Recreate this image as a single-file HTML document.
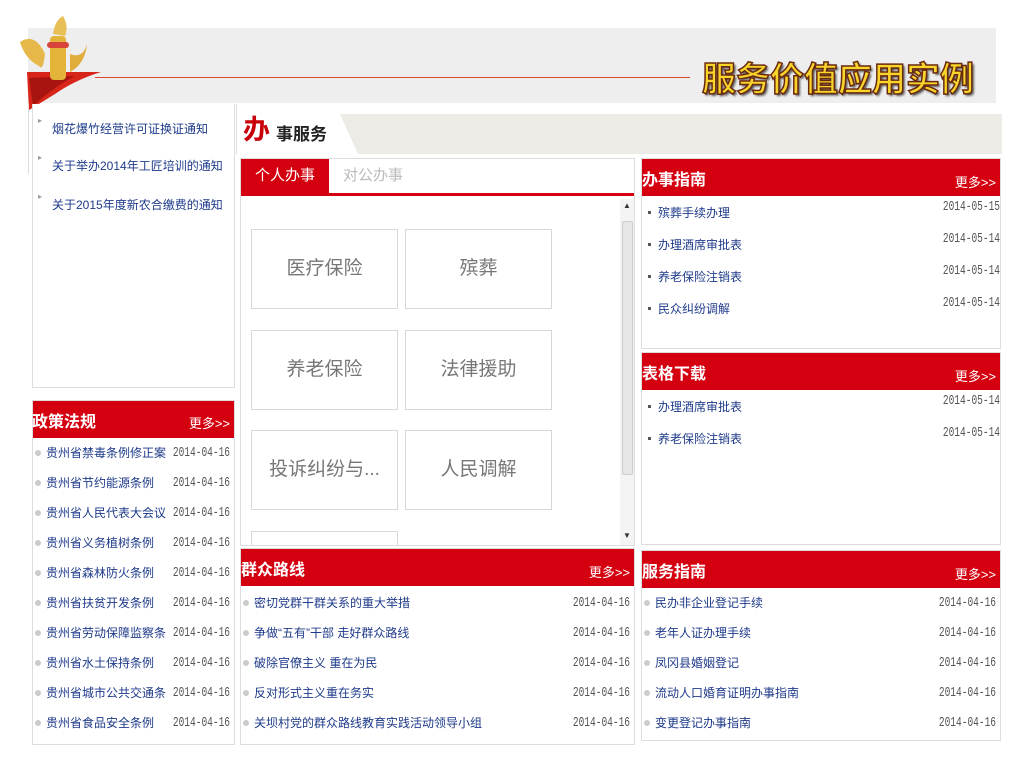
<!DOCTYPE html>
<html><head><meta charset="utf-8">
<style>
*{margin:0;padding:0;box-sizing:border-box}
body{width:1024px;height:768px;background:#fff;position:relative;overflow:hidden;font-family:"Liberation Sans","Noto Sans CJK SC","WenQuanYi Zen Hei",sans-serif;font-size:12px;color:#1e3a8a}
.a{position:absolute}
.hdr{background:#d4000f;color:#fff;height:37px}
.hdr b{position:absolute;left:0;top:7px;font-size:16px;font-weight:bold}
.hdr i{position:absolute;right:4px;top:13px;font-style:normal;font-size:13px;color:#fff}
.row{position:absolute;left:0;right:0;height:30px;line-height:30px;white-space:nowrap;font-size:12px}
.dot{display:inline-block;width:6px;height:6px;border-radius:3px;background:#ccc;margin:0 5px 1px 2px;vertical-align:middle}
.sq{display:inline-block;width:3px;height:3px;background:#555;margin:0 7px 2px 6px;vertical-align:middle}
.dt{position:absolute;right:4px;top:0;color:#555;font-family:"Liberation Mono",monospace;font-size:14px;transform:scaleX(0.68);transform-origin:right center}
.btn{position:absolute;width:147px;height:80px;border:1px solid #d8d8d8;text-align:center;line-height:78px;font-size:19px;color:#777}
.box{position:absolute;border:1px solid #ddd;background:#fff}
.nt{position:absolute;left:38px;white-space:nowrap;font-size:12px}
.nt s{text-decoration:none;color:#999;font-size:8px;position:absolute;left:0;top:-4px}
.nt span{margin-left:14px}
</style></head><body>
<div class="a" style="left:28px;top:28px;width:968px;height:75px;background:#eeeeee"></div>
<div class="a" style="left:95px;top:77px;width:595px;height:1px;background:#d8482a"></div>
<svg class="a" style="left:15px;top:14px" width="90" height="96">
<path d="M12 58 L86 58 Q60 66 40 80 L14 96 Z" fill="#d8251a"/>
<path d="M14 64 L60 62 Q40 72 18 92 Z" fill="#a81510"/>
<rect x="35" y="22" width="16" height="44" rx="4" fill="#e3b33a"/>
<path d="M5 28 Q20 18 30 40 Q28 58 24 52 Q10 45 5 28Z" fill="#e6b84a"/>
<path d="M55 40 Q68 45 72 30 Q70 50 55 58Z" fill="#e0ac3c"/>
<path d="M38 20 Q40 6 48 2 Q54 12 50 22Z" fill="#e8c058"/>
<rect x="32" y="28" width="22" height="6" rx="3" fill="#d8453a"/>
</svg>
<div class="a" style="left:702px;top:52px;font-size:34px;font-weight:bold;color:#f8d52a;-webkit-text-stroke:1.5px #6a2a10;text-shadow:2px 2px 2px #555;white-space:nowrap">服务价值应用实例</div>

<div class="box" style="left:32px;top:104px;width:203px;height:284px;border-top:none"></div>
<div class="a" style="left:28px;top:104px;width:1px;height:70px;background:#ddd"></div>
<div class="nt" style="top:120px"><s>▸</s><span>烟花爆竹经营许可证换证通知</span></div>
<div class="nt" style="top:157px"><s>▸</s><span>关于举办2014年工匠培训的通知</span></div>
<div class="nt" style="top:196px"><s>▸</s><span>关于2015年度新农合缴费的通知</span></div>

<div class="box" style="left:32px;top:400px;width:203px;height:345px">
<div class="hdr a" style="left:0;top:0;width:201px"><b style="left:-1px">政策法规</b><i style="top:12px">更多&gt;&gt;</i></div>
<div class="a" style="left:0;top:37px;width:201px">
<div class="row" style="top:0"><span class="dot"></span>贵州省禁毒条例修正案<span class="dt">2014-04-16</span></div>
<div class="row" style="top:30px"><span class="dot"></span>贵州省节约能源条例<span class="dt">2014-04-16</span></div>
<div class="row" style="top:60px"><span class="dot"></span>贵州省人民代表大会议<span class="dt">2014-04-16</span></div>
<div class="row" style="top:90px"><span class="dot"></span>贵州省义务植树条例<span class="dt">2014-04-16</span></div>
<div class="row" style="top:120px"><span class="dot"></span>贵州省森林防火条例<span class="dt">2014-04-16</span></div>
<div class="row" style="top:150px"><span class="dot"></span>贵州省扶贫开发条例<span class="dt">2014-04-16</span></div>
<div class="row" style="top:180px"><span class="dot"></span>贵州省劳动保障监察条<span class="dt">2014-04-16</span></div>
<div class="row" style="top:210px"><span class="dot"></span>贵州省水土保持条例<span class="dt">2014-04-16</span></div>
<div class="row" style="top:240px"><span class="dot"></span>贵州省城市公共交通条<span class="dt">2014-04-16</span></div>
<div class="row" style="top:270px"><span class="dot"></span>贵州省食品安全条例<span class="dt">2014-04-16</span></div>
</div></div>

<div class="a" style="left:236px;top:104px;width:1px;height:50px;background:#ddd"></div>
<svg class="a" style="left:340px;top:114px" width="662" height="40"><path d="M0 0 L662 0 L662 40 L18 40 Z" fill="#ecebe6"/></svg>
<div class="a" style="left:243px;top:108px;font-size:27px;font-weight:bold;color:#c8000a">办</div>
<div class="a" style="left:276px;top:120px;font-size:17px;font-weight:bold;color:#222">事服务</div>

<div class="box" style="left:240px;top:158px;width:395px;height:388px">
<div class="a" style="left:0;top:0;width:88px;height:34px;background:#d4000f;color:#fff;font-size:15px;line-height:34px;text-align:center">个人办事</div>
<div class="a" style="left:102px;top:0;font-size:15px;line-height:34px;color:#bbb">对公办事</div>
<div class="a" style="left:0;top:34px;width:393px;height:3px;background:#d4000f"></div>
<div class="a" style="left:379px;top:40px;width:14px;height:346px;background:#f4f4f4"></div>
<div class="a" style="left:381px;top:62px;width:11px;height:254px;background:#e6e6e6;border:1px solid #ccc;border-radius:2px"></div>
<div class="a" style="left:382px;top:42px;font-size:8px;color:#333">▲</div>
<div class="a" style="left:382px;top:372px;font-size:8px;color:#333">▼</div>
</div>
<div class="btn" style="left:251px;top:229px">医疗保险</div>
<div class="btn" style="left:405px;top:229px">殡葬</div>
<div class="btn" style="left:251px;top:330px">养老保险</div>
<div class="btn" style="left:405px;top:330px">法律援助</div>
<div class="btn" style="left:251px;top:430px">投诉纠纷与...</div>
<div class="btn" style="left:405px;top:430px">人民调解</div>
<div class="a" style="left:251px;top:531px;width:147px;height:14px;border:1px solid #d8d8d8;border-bottom:none"></div>

<div class="box" style="left:240px;top:548px;width:395px;height:197px">
<div class="hdr a" style="left:0;top:0;width:393px"><b>群众路线</b><i>更多&gt;&gt;</i></div>
<div class="a" style="left:0;top:39px;width:393px">
<div class="row" style="top:0"><span class="dot"></span>密切党群干群关系的重大举措<span class="dt">2014-04-16</span></div>
<div class="row" style="top:30px"><span class="dot"></span>争做“五有”干部 走好群众路线<span class="dt">2014-04-16</span></div>
<div class="row" style="top:60px"><span class="dot"></span>破除官僚主义 重在为民<span class="dt">2014-04-16</span></div>
<div class="row" style="top:90px"><span class="dot"></span>反对形式主义重在务实<span class="dt">2014-04-16</span></div>
<div class="row" style="top:120px"><span class="dot"></span>关坝村党的群众路线教育实践活动领导小组<span class="dt">2014-04-16</span></div>
</div></div>

<div class="box" style="left:641px;top:158px;width:360px;height:191px">
<div class="hdr a" style="left:0;top:0;width:358px"><b>办事指南</b><i>更多&gt;&gt;</i></div>
<div class="a" style="left:0;top:38px;width:358px">
<div class="row" style="top:0;height:32px;line-height:32px"><span class="sq"></span>殡葬手续办理<span class="dt" style="top:-6px;right:0">2014-05-15</span></div>
<div class="row" style="top:32px;height:32px;line-height:32px"><span class="sq"></span>办理酒席审批表<span class="dt" style="top:-6px;right:0">2014-05-14</span></div>
<div class="row" style="top:64px;height:32px;line-height:32px"><span class="sq"></span>养老保险注销表<span class="dt" style="top:-6px;right:0">2014-05-14</span></div>
<div class="row" style="top:96px;height:32px;line-height:32px"><span class="sq"></span>民众纠纷调解<span class="dt" style="top:-6px;right:0">2014-05-14</span></div>
</div></div>

<div class="box" style="left:641px;top:352px;width:360px;height:193px">
<div class="hdr a" style="left:0;top:0;width:358px"><b>表格下载</b><i>更多&gt;&gt;</i></div>
<div class="a" style="left:0;top:38px;width:358px">
<div class="row" style="top:0;height:32px;line-height:32px"><span class="sq"></span>办理酒席审批表<span class="dt" style="top:-6px;right:0">2014-05-14</span></div>
<div class="row" style="top:32px;height:32px;line-height:32px"><span class="sq"></span>养老保险注销表<span class="dt" style="top:-6px;right:0">2014-05-14</span></div>
</div></div>

<div class="box" style="left:641px;top:550px;width:360px;height:191px">
<div class="hdr a" style="left:0;top:0;width:358px"><b>服务指南</b><i>更多&gt;&gt;</i></div>
<div class="a" style="left:0;top:37px;width:358px">
<div class="row" style="top:0"><span class="dot"></span>民办非企业登记手续<span class="dt">2014-04-16</span></div>
<div class="row" style="top:30px"><span class="dot"></span>老年人证办理手续<span class="dt">2014-04-16</span></div>
<div class="row" style="top:60px"><span class="dot"></span>凤冈县婚姻登记<span class="dt">2014-04-16</span></div>
<div class="row" style="top:90px"><span class="dot"></span>流动人口婚育证明办事指南<span class="dt">2014-04-16</span></div>
<div class="row" style="top:120px"><span class="dot"></span>变更登记办事指南<span class="dt">2014-04-16</span></div>
</div></div>
</body></html>
